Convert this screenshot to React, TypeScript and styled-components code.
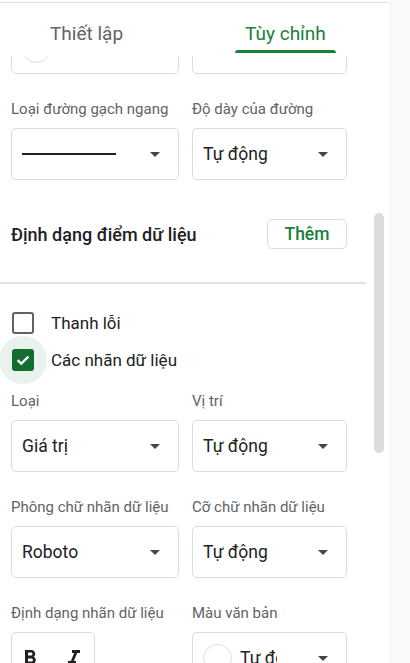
import React, { useLayoutEffect, useRef } from "react";
import styled, { createGlobalStyle } from "styled-components";
import { MdFormatBold, MdFormatItalic } from "react-icons/md";

const GlobalStyle = createGlobalStyle`
  html, body { margin: 0; padding: 0; background: #f8f9fa; }
  body {
    font-family: Roboto, "Noto Sans", "Liberation Sans", sans-serif;
    -webkit-font-smoothing: antialiased;
  }
  * { box-sizing: border-box; }
`;

const Page = styled.div`
  display: flex;
  height: 663px;
  overflow: hidden;
`;

const Panel = styled.aside`
  position: relative;
  width: 389px;
  height: 100%;
  background: #fff;
  padding-top: 2px;
  display: flex;
  flex-direction: column;
`;

const Header = styled.div`
  flex: none;
  height: 54px;
  border-top: 1px solid #e3e3e3;
  display: flex;
  align-items: stretch;
  gap: 102px;
  padding-left: 40px;
  background: #fff;
`;

const Tab = styled.div<{ $active?: boolean }>`
  position: relative;
  display: flex;
  align-items: center;
  padding: 7px 10px 0;
  font-size: 19px;
  font-weight: 400;
  color: ${(p) => (p.$active ? "#188038" : "#5f6368")};
  &::after {
    content: "";
    display: ${(p) => (p.$active ? "block" : "none")};
    position: absolute;
    left: 0;
    right: 0;
    bottom: 3px;
    height: 3px;
    border-radius: 3px 3px 0 0;
    background: #188038;
  }
`;

const Scroller = styled.div`
  flex: 1;
  overflow: hidden;
`;

const Content = styled.div`
  width: 366px;
`;

const FieldRow = styled.div`
  display: grid;
  grid-template-columns: 168px 155px;
  column-gap: 13px;
  row-gap: 9px;
  padding: 0 19px 0 11px;
  margin-bottom: 25px;
`;

const Label = styled.div`
  min-height: 20px;
  font-size: 15px;
  line-height: 20px;
  color: #5f6368;
  white-space: nowrap;
`;

const Select = styled.div`
  height: 52px;
  border: 1px solid #dadce0;
  border-radius: 5px;
  display: flex;
  align-items: center;
  gap: 8px;
  padding: 0 18px 0 10px;
  font-size: 17.5px;
  color: #202124;
  overflow: hidden;
`;

const Value = styled.span<{ $clip?: number }>`
  white-space: nowrap;
  overflow: hidden;
  ${(p) => (p.$clip ? `width: ${p.$clip}px; flex: none;` : "flex: 1;")}
`;

const Caret = styled.svg`
  flex: none;
  margin-left: auto;
  width: 10px;
  height: 5px;
  fill: #444746;
`;

const Swatch = styled.span`
  flex: none;
  width: 29px;
  height: 29px;
  border-radius: 50%;
  border: 1px solid #dadce0;
  background: #fff;
`;

const LineSample = styled.span`
  flex: none;
  width: 94px;
  height: 2px;
  background: #202124;
`;

const SectionHead = styled.div`
  display: flex;
  align-items: center;
  justify-content: space-between;
  padding: 14px 19px 33px 11px;
`;

const Title = styled.div`
  font-size: 18px;
  font-weight: 500;
  color: #202124;
`;

const OutlineButton = styled.button`
  width: 80px;
  height: 30px;
  border: 1px solid #dadce0;
  border-radius: 5px;
  background: #fff;
  font-family: inherit;
  font-size: 17.5px;
  font-weight: 500;
  color: #188038;
  padding: 0;
`;

const Divider = styled.div`
  height: 2px;
  background: #e3e3e3;
`;

const CheckList = styled.div`
  padding: 20px 0 13px;
`;

const CheckRow = styled.label`
  display: flex;
  align-items: center;
  gap: 17px;
  height: 37px;
  padding-left: 12px;
  font-size: 17px;
  color: #202124;
`;

const CheckHit = styled.span<{ $focus?: boolean }>`
  flex: none;
  width: 48px;
  height: 48px;
  margin: -13px;
  border-radius: 50%;
  display: flex;
  align-items: center;
  justify-content: center;
  background: ${(p) => (p.$focus ? "#e9f2ec" : "transparent")};
`;

const Box = styled.span<{ $checked?: boolean }>`
  width: 22px;
  height: 22px;
  border-radius: 3px;
  border: 2px solid ${(p) => (p.$checked ? "#146c2e" : "#5f6368")};
  background: ${(p) => (p.$checked ? "#146c2e" : "#fff")};
  display: flex;
  align-items: center;
  justify-content: center;
`;

const ToggleGroup = styled.div`
  width: 84px;
  height: 52px;
  border: 1px solid #dadce0;
  border-radius: 5px;
  display: flex;
  align-items: center;
  gap: 20px;
  padding-left: 6px;
  color: #202124;
  font-size: 24px;
  svg { flex: none; }
`;

const ScrollThumb = styled.div`
  position: absolute;
  top: 213px;
  left: 374px;
  width: 10px;
  height: 240px;
  border-radius: 5px;
  background: #dadce0;
`;

const Arrow = () => (
  <Caret viewBox="0 0 10 5">
    <polygon points="0,0 10,0 5,5" />
  </Caret>
);

const Check = ({ checked, label }: { checked?: boolean; label: string }) => (
  <CheckRow>
    <CheckHit $focus={checked}>
      <Box $checked={checked}>
        {checked && (
          <svg width="16" height="16" viewBox="0 0 16 16">
            <path d="M2.6 8.2 L6.2 11.6 L13.4 4.6" fill="none" stroke="#fff" strokeWidth="2.4" />
          </svg>
        )}
      </Box>
    </CheckHit>
    {label}
  </CheckRow>
);

export default function App() {
  const scroller = useRef<HTMLDivElement>(null);
  useLayoutEffect(() => {
    if (scroller.current) scroller.current.scrollTop = 63;
  }, []);

  return (
    <>
      <GlobalStyle />
      <Page>
        <Panel>
          <Header>
            <Tab>Thiết lập</Tab>
            <Tab $active>Tùy chỉnh</Tab>
          </Header>
          <Scroller ref={scroller}>
            <Content>
              <FieldRow>
                <Label />
                <Label />
                <Select>
                  <Swatch />
                  <Arrow />
                </Select>
                <Select>
                  <Arrow />
                </Select>
              </FieldRow>

              <FieldRow>
                <Label>Loại đường gạch ngang</Label>
                <Label>Độ dày của đường</Label>
                <Select>
                  <LineSample />
                  <Arrow />
                </Select>
                <Select>
                  <Value>Tự động</Value>
                  <Arrow />
                </Select>
              </FieldRow>

              <SectionHead>
                <Title>Định dạng điểm dữ liệu</Title>
                <OutlineButton>Thêm</OutlineButton>
              </SectionHead>
              <Divider />

              <CheckList>
                <Check label="Thanh lỗi" />
                <Check checked label="Các nhãn dữ liệu" />
              </CheckList>

              <FieldRow>
                <Label>Loại</Label>
                <Label>Vị trí</Label>
                <Select>
                  <Value>Giá trị</Value>
                  <Arrow />
                </Select>
                <Select>
                  <Value>Tự động</Value>
                  <Arrow />
                </Select>
              </FieldRow>

              <FieldRow>
                <Label>Phông chữ nhãn dữ liệu</Label>
                <Label>Cỡ chữ nhãn dữ liệu</Label>
                <Select>
                  <Value>Roboto</Value>
                  <Arrow />
                </Select>
                <Select>
                  <Value>Tự động</Value>
                  <Arrow />
                </Select>
              </FieldRow>

              <FieldRow>
                <Label>Định dạng nhãn dữ liệu</Label>
                <Label>Màu văn bản</Label>
                <ToggleGroup>
                  <MdFormatBold />
                  <MdFormatItalic />
                </ToggleGroup>
                <Select>
                  <Swatch />
                  <Value $clip={37}>Tự động</Value>
                  <Arrow />
                </Select>
              </FieldRow>
            </Content>
          </Scroller>
          <ScrollThumb />
        </Panel>
      </Page>
    </>
  );
}
